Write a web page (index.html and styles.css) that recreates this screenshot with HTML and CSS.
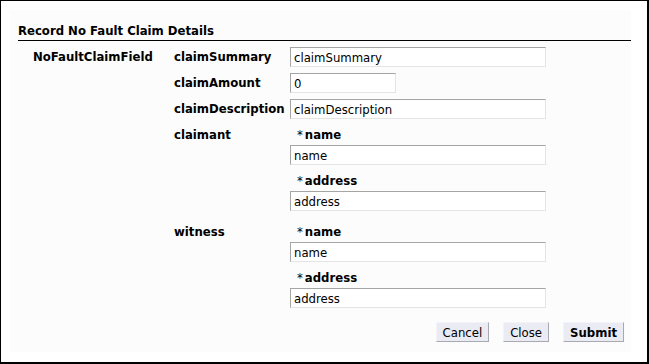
FILE: index.html
```html
<!DOCTYPE html>
<html lang="en">
<head>
  <meta charset="UTF-8">
  <title>Record No Fault Claim Details</title>
  <link rel="stylesheet" href="styles.css">
</head>
<body>
  <div class="frame">
    <div class="panel">
      <h2 class="title">Record No Fault Claim Details</h2>
      <div class="form">
        <div class="group-name">NoFaultClaimField</div>
        <div class="fields">
          <div class="row">
            <label class="field-label">claimSummary</label>
            <input class="text-input" type="text" value="claimSummary">
          </div>
          <div class="row">
            <label class="field-label">claimAmount</label>
            <input class="text-input short" type="text" value="0">
          </div>
          <div class="row">
            <label class="field-label">claimDescription</label>
            <input class="text-input" type="text" value="claimDescription">
          </div>
          <div class="row nested">
            <label class="field-label">claimant</label>
            <div class="sub-fields">
              <div class="sub-label"><span class="req">*</span>name</div>
              <input class="text-input" type="text" value="name">
              <div class="sub-label"><span class="req">*</span>address</div>
              <input class="text-input" type="text" value="address">
            </div>
          </div>
          <div class="row nested">
            <label class="field-label">witness</label>
            <div class="sub-fields">
              <div class="sub-label"><span class="req">*</span>name</div>
              <input class="text-input" type="text" value="name">
              <div class="sub-label"><span class="req">*</span>address</div>
              <input class="text-input" type="text" value="address">
            </div>
          </div>
        </div>
      </div>
      <div class="actions">
        <button class="btn">Cancel</button>
        <button class="btn">Close</button>
        <button class="btn primary">Submit</button>
      </div>
    </div>
  </div>
</body>
</html>
```

FILE: styles.css
```css
html, body {
  margin: 0;
  padding: 0;
  background: #fff;
}
body {
  font-family: 'DejaVu Sans Condensed', 'DejaVu Sans', sans-serif;
  font-size: 13px;
  color: #000;
}
.frame {
  box-sizing: border-box;
  width: 649px;
  height: 364px;
  border: 1px solid #000;
  border-right-width: 2px;
  border-bottom-width: 2px;
  padding: 9px 16px 10px 9px;
}
.panel {
  background: #fcfcfc;
  height: 100%;
  padding: 0 0 0 8px;
}
.title {
  margin: 0;
  padding-top: 13px;
  padding-bottom: 2px;
  font-size: 13px;
  font-weight: bold;
  line-height: 15px;
  border-bottom: 1px solid #000;
}
.form {
  display: flex;
  padding-left: 15px;
  padding-top: 6px;
}
.group-name {
  width: 141px;
  font-weight: bold;
  line-height: 20px;
}
.fields {
  display: flex;
  flex-direction: column;
  gap: 6px;
}
.row {
  display: flex;
}
.field-label {
  width: 116px;
  font-weight: bold;
  line-height: 20px;
}
.row.nested {
  margin-top: 2px;
}
.row.nested .field-label {
  line-height: 16px;
}
.row.nested + .row.nested {
  margin-top: 7px;
}
.sub-fields {
  display: flex;
  flex-direction: column;
}
.sub-label {
  font-weight: bold;
  line-height: 16px;
  padding-left: 7px;
  margin-bottom: 2px;
}
.sub-label .req {
  font-weight: normal;
  margin-right: 2px;
}
.sub-fields .text-input + .sub-label {
  margin-top: 8px;
}
.text-input {
  box-sizing: border-box;
  width: 256px;
  height: 20px;
  margin: 0;
  padding: 0 3px;
  font-family: inherit;
  font-size: 13px;
  color: #000;
  background: #fff;
  border: 1px solid #e4e4e4;
  border-top-color: #a5a5a5;
  border-left-color: #a5a5a5;
  outline: none;
}
.text-input.short {
  width: 106px;
}
.actions {
  display: flex;
  justify-content: flex-end;
  gap: 14px;
  margin-top: 14px;
  padding-right: 7px;
}
.btn {
  box-sizing: border-box;
  height: 20px;
  padding: 0 6px;
  font-family: inherit;
  font-size: 13px;
  color: #000;
  background: #ebebf4;
  border: 1px solid #a8a8b0;
  border-top-color: #f4f4f8;
  border-left-color: #f4f4f8;
  cursor: pointer;
}
.btn.primary {
  font-weight: bold;
}
```
